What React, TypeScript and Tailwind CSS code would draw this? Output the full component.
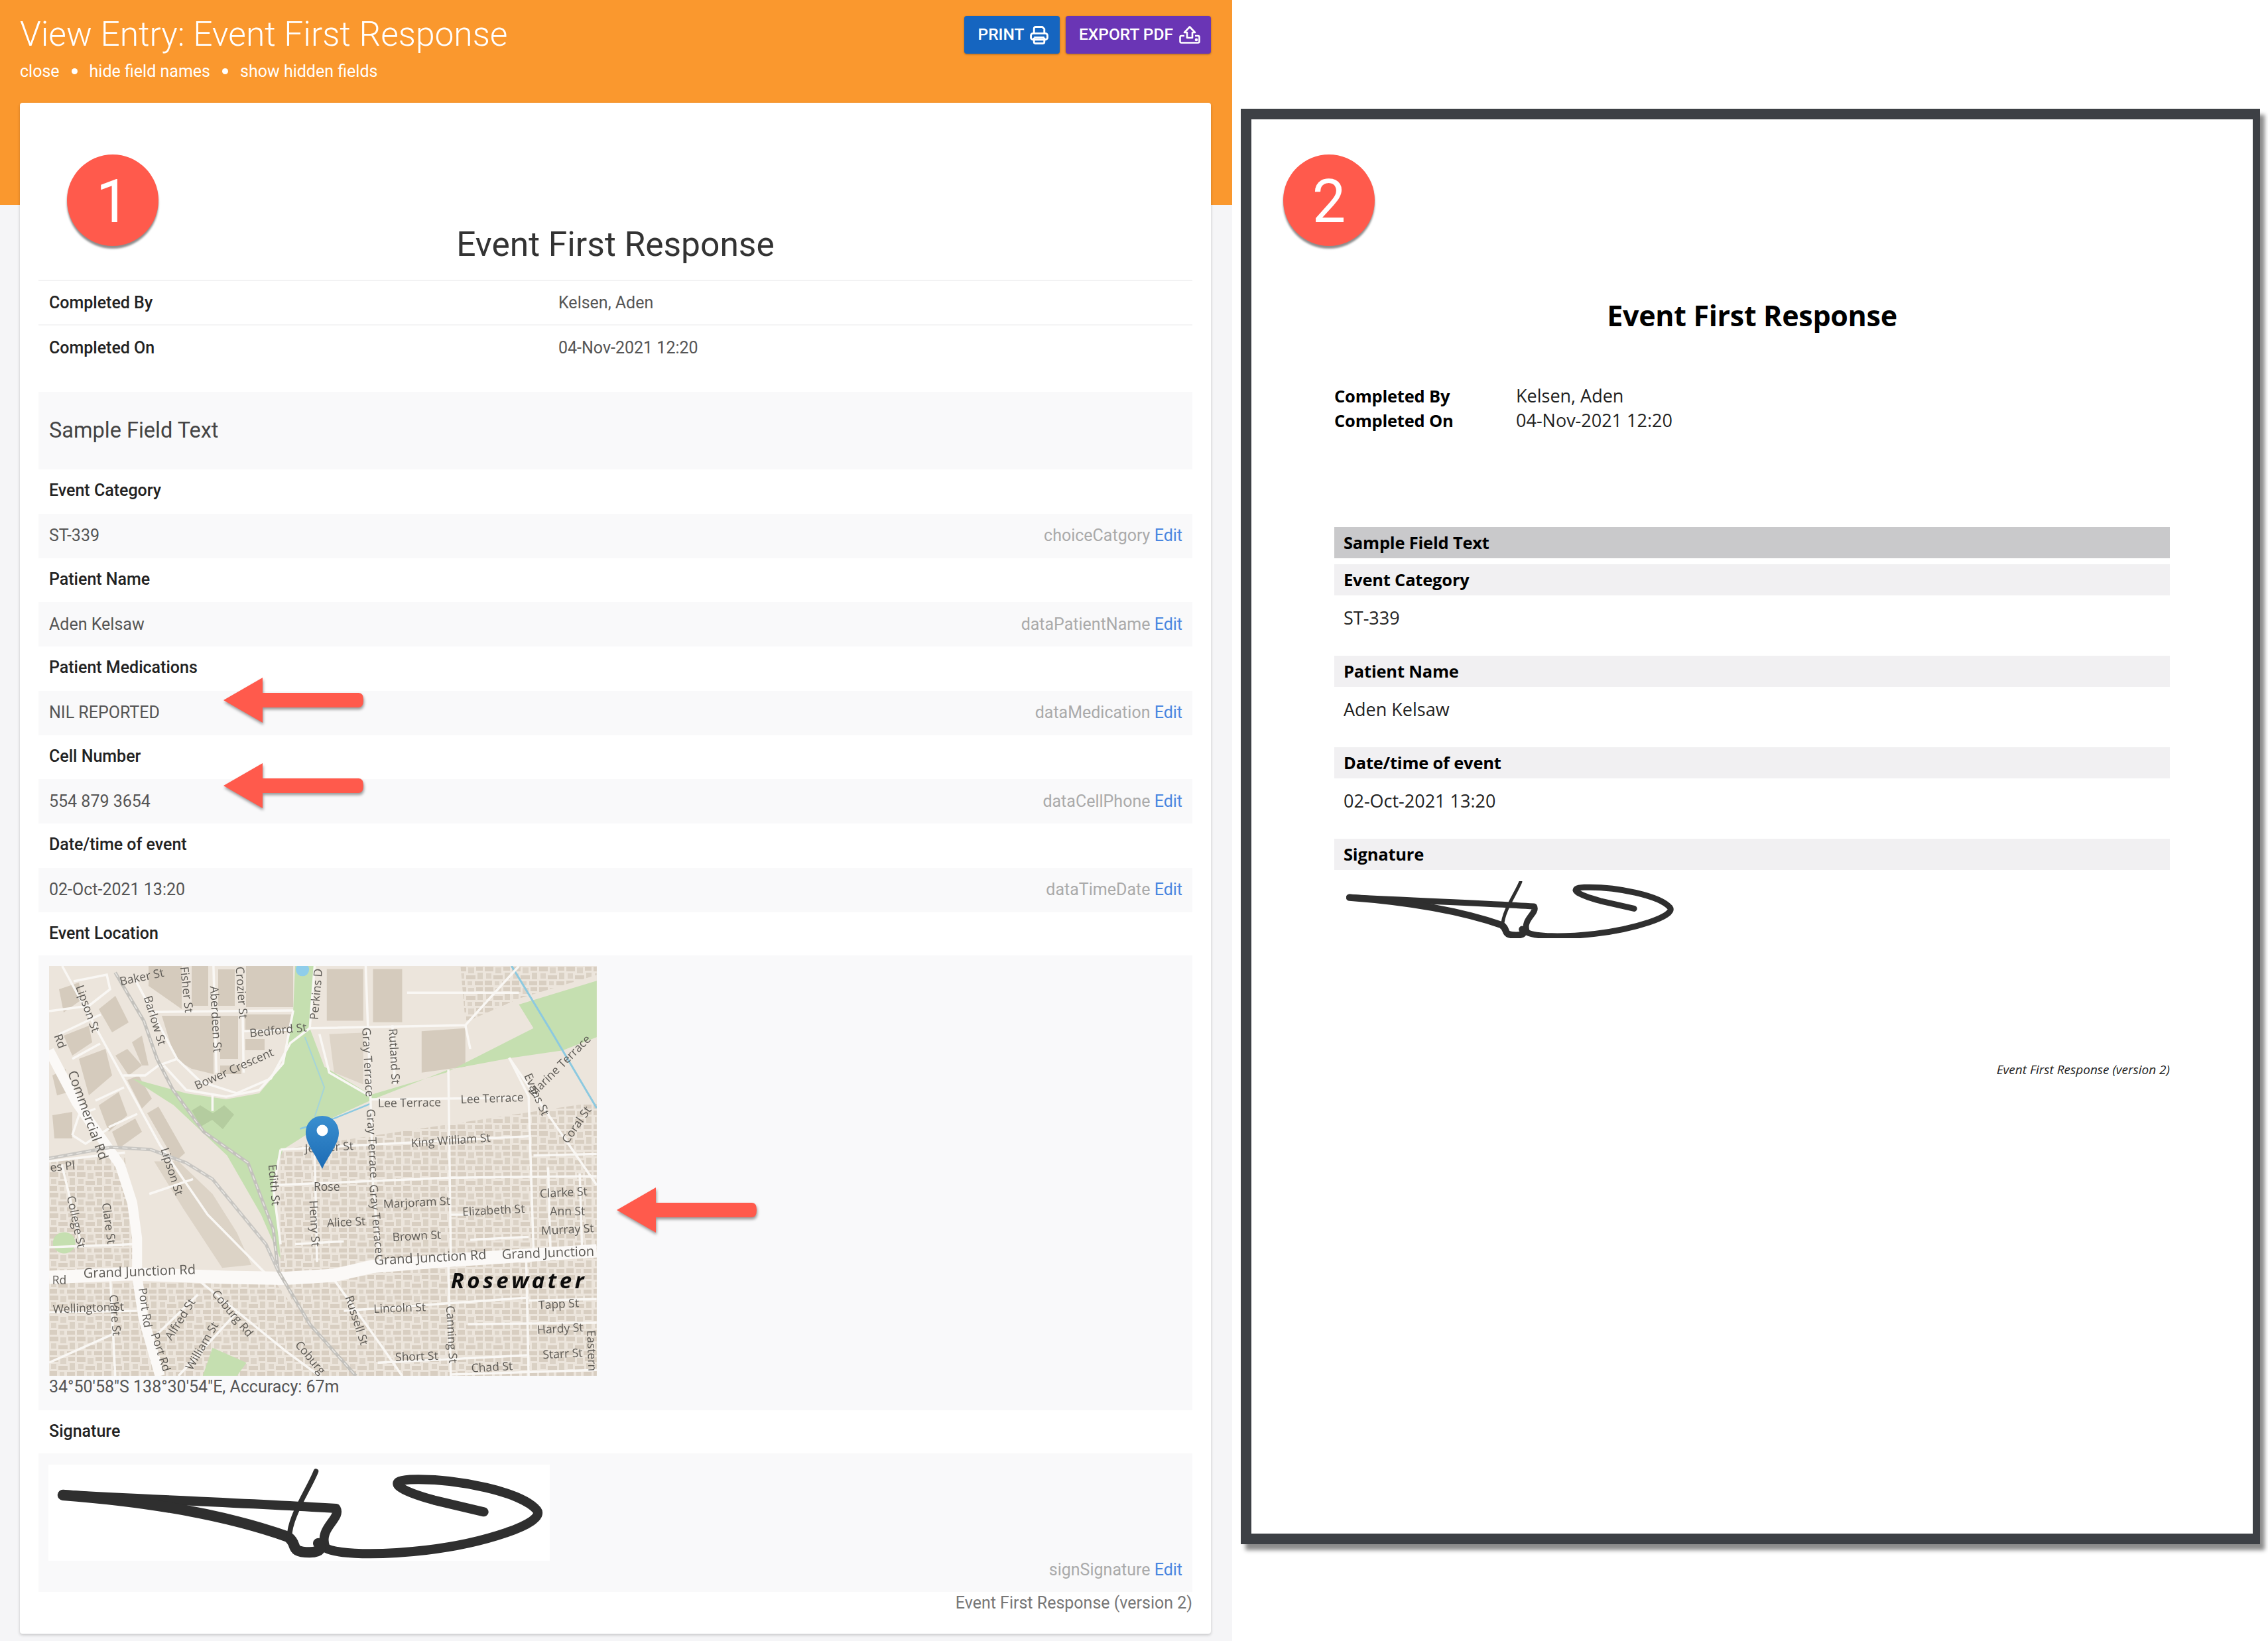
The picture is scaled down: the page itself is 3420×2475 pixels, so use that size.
import type { ReactNode } from "react"

// --- map helpers: coordinates were read off the zoomed crop
const mx = (x: number) => (x - 34) * 0.7334
const my = (y: number) => (y - 60) * 0.4464
const pts = (list: number[][]) => list.map(([x, y]) => `${mx(x)},${my(y)}`).join(" ")

const bigRoads = [
  { w: 20, p: [[34, 1112], [200, 1100], [400, 1112], [520, 1115], [620, 1105], [700, 1075], [850, 1055], [1160, 1022]] },
  { w: 15, p: [[34, 345], [90, 520], [180, 732], [205, 860], [215, 980], [215, 1110], [228, 1250], [262, 1445]] },
]

const roads = [
  [[61, 60], [262, 665], [360, 900], [480, 1100]],
  [[211, 105], [297, 374], [345, 450], [420, 490], [490, 440], [530, 320], [570, 270]],
  [[270, 396], [316, 479], [398, 501], [466, 479], [515, 389], [536, 210]],
  [[250, 215], [536, 210]],
  [[372, 60], [378, 420]],
  [[432, 215], [434, 420]],
  [[435, 280], [536, 275]],
  [[370, 495], [370, 550]],
  [[580, 60], [570, 270], [890, 260], [1000, 60]],
  [[685, 60], [695, 510], [700, 800], [715, 1060]],
  [[740, 260], [745, 460]],
  [[770, 150], [1000, 150]],
  [[890, 260], [900, 340]],
  [[590, 290], [610, 420], [695, 500]],
  [[695, 510], [1010, 505]],
  [[855, 410], [860, 1050]],
  [[980, 370], [1020, 500], [1030, 1020]],
  [[980, 370], [1160, 800]],
  [[510, 680], [1020, 635]],
  [[510, 680], [495, 810], [510, 1000]],
  [[580, 680], [585, 1060]],
  [[500, 800], [860, 775], [1160, 770]],
  [[860, 900], [900, 900]],
  [[900, 985], [1020, 975]],
  [[1030, 700], [1160, 695]],
  [[1060, 740], [1065, 1020]],
  [[1125, 760], [1130, 1020]],
  [[540, 1000], [640, 990]],
  [[34, 720], [190, 690]],
  [[34, 1010], [210, 1000]],
  [[60, 730], [100, 1000]],
  [[160, 1120], [170, 1445]],
  [[34, 1230], [215, 1225]],
  [[340, 1120], [520, 1360], [590, 1445]],
  [[620, 1120], [720, 1350], [760, 1445]],
  [[640, 1225], [1020, 1180]],
  [[855, 1060], [860, 1445]],
  [[1015, 1050], [1020, 1445]],
  [[895, 1270], [1160, 1265]],
  [[710, 1400], [1020, 1375]],
  [[860, 1440], [1160, 1425]],
  [[1020, 1190], [1160, 1185]],
  [[420, 1230], [300, 1445]],
  [[240, 1330], [340, 1170]],
  [[34, 1400], [170, 1300]],
  [[240, 830], [330, 780]],
]

// cross streets at the top left, in map pixels
const pxRoads = [
  "37,23 87,13 92,35 60,60 0,68",
  "15,103 78,73",
  "35,140 77,117",
  "70,203 113,183",
  "90,243 133,223",
  "112,165 145,165 165,150 193,140",
  "35,255 45,225 70,215",
  "35,255 55,268 90,245",
]

const pxBuildings = [
  "150,0 200,0 200,65 150,30", "170,75 248,75 248,163 215,155 190,140", "297,0 368,0 368,62 297,62",
  "296,73 365,73 360,100 296,100", "258,150 290,150 290,163 258,163", "296,110 325,110 325,127 296,127",
  "75,65 100,45 120,85 95,100", "100,135 118,125 140,150 120,165", "125,115 140,105 150,150 140,150",
  "148,222 165,212 205,282 190,295", "118,172 135,165 155,200 140,215",
  "15,35 45,25 50,50 22,70", "22,105 60,90 65,115 35,135", "45,140 85,125 95,165 60,195",
  "75,210 105,190 118,225 90,250", "95,250 130,230 140,250 105,275", "5,225 35,220 35,260 8,260",
  "5,165 25,155 30,190 12,195", "215,0 240,0 240,60 215,60", "255,5 280,5 280,60 255,60",
  "258,75 285,75 285,140 258,140",
]

const labels: [string, number, number, number][] = [
  ["Baker St", 225, 100, -12], ["Fisher St", 315, 140, 84], ["Crozier St", 428, 150, 86], ["Aberdeen St", 375, 240, 87],
  ["Perkins D", 585, 155, -85], ["Lipson St", 112, 205, 70], ["Barlow St", 250, 245, 73], ["Bedford St", 505, 280, -6],
  ["Gray Terrace", 688, 385, 87], ["Rutland St", 742, 365, 87], ["Bower Crescent", 415, 410, -24], ["Marine Terrace", 1085, 400, -45],
  ["Lee Terrace", 775, 525, -1], ["Lee Terrace", 945, 510, -2], ["Evans St", 1035, 495, 66], ["Coral St", 1120, 598, -55],
  ["Commercial Rd", 112, 565, 70], ["Rd", 55, 315, 70], ["King William St", 860, 652, -4], ["Jenner St", 610, 675, -3],
  ["Edith St", 495, 800, 85], ["Rose", 605, 808, 0], ["Henry St", 578, 930, 87], ["Gray Terrace", 705, 915, 85],
  ["Gray Terrace", 697, 660, 87], ["Marjoram St", 790, 862, -3], ["Elizabeth St", 948, 888, -3], ["Clarke St", 1092, 828, -3],
  ["Ann St", 1100, 892, 0], ["Murray St", 1100, 953, -3], ["Alice St", 645, 928, -3], ["Brown St", 790, 975, -3],
  ["Grand Junction Rd", 818, 1048, -3], ["Grand Junction", 1060, 1032, -2], ["Grand Junction Rd", 220, 1095, -2], ["Rd", 55, 1125, 0],
  ["Lipson St", 285, 755, 72], ["es Pl", 62, 740, -6], ["College St", 88, 925, 78], ["Clare St", 155, 930, 82],
  ["Port Rd", 230, 1215, 82], ["Port Rd", 262, 1365, 72], ["Russell St", 665, 1258, 72], ["Lincoln St", 755, 1218, -2],
  ["Canning St", 860, 1305, 87], ["Tapp St", 1082, 1205, -3], ["Hardy St", 1085, 1288, -3], ["Starr St", 1090, 1373, -3],
  ["Short St", 790, 1382, -2], ["Chad St", 945, 1418, -3], ["William St", 350, 1345, -60], ["Alfred St", 305, 1255, -58],
  ["Coburg Rd", 410, 1235, 50], ["Clare St", 168, 1240, 85], ["Wellington St", 115, 1218, -2], ["Coburg", 570, 1385, 50], ["Eastern", 1148, 1360, 88],
]

function MapPicture() {
  return (
    <svg width="826" height="618" viewBox="0 0 826 618" className="block blur-[0.6px]">
      <defs>
        <pattern id="houses" width="41" height="31" patternUnits="userSpaceOnUse">
          <rect x="1" y="1" width="13" height="7" fill="#d8cec1" />
          <rect x="17" y="2" width="9" height="9" fill="#dcd3c7" />
          <rect x="29" y="1" width="10" height="6" fill="#d8cec1" />
          <rect x="3" y="11" width="8" height="8" fill="#dcd3c7" />
          <rect x="14" y="14" width="14" height="6" fill="#d8cec1" />
          <rect x="31" y="10" width="8" height="10" fill="#dad1c4" />
          <rect x="1" y="22" width="11" height="7" fill="#d8cec1" />
          <rect x="16" y="23" width="7" height="6" fill="#dcd3c7" />
          <rect x="27" y="23" width="12" height="6" fill="#d8cec1" />
        </pattern>
        <linearGradient id="pin" x1="0" y1="0" x2="0" y2="1">
          <stop offset="0" stopColor="#3a8fd0" />
          <stop offset="1" stopColor="#1c6bb4" />
        </linearGradient>
      </defs>
      <rect width="826" height="618" fill="#ece5dc" />
      <polygon points={pts([[510, 680], [1160, 520], [1160, 1445], [600, 1445], [510, 1100]])} fill="url(#houses)" />
      <polygon points={pts([[34, 720], [190, 700], [210, 1090], [34, 1090]])} fill="url(#houses)" />
      <polygon points={pts([[34, 1130], [500, 1130], [640, 1445], [34, 1445]])} fill="url(#houses)" />
      <polygon points={pts([[880, 60], [1160, 60], [1160, 90], [1000, 170], [890, 250]])} fill="url(#houses)" />
      {pxBuildings.map((p, i) => (
        <polygon key={i} points={p} fill="#d5cbbd" />
      ))}
      {/* big sheds north of the park */}
      <polygon points={pts([[605, 70], [680, 70], [680, 245], [605, 245]])} fill="#d5cbbd" />
      <polygon points={pts([[700, 70], [760, 70], [760, 250], [700, 250]])} fill="#d5cbbd" />
      <polygon points={pts([[800, 280], [890, 270], [890, 400], [800, 420]])} fill="#d5cbbd" />
      <polygon points={pts([[610, 290], [680, 285], [680, 460], [620, 420]])} fill="#ddd4c7" />
      <polygon points={pts([[300, 720], [370, 830], [420, 960], [450, 1070], [390, 1080], [310, 880], [250, 720]])} fill="#dcd3c6" />
      {/* park */}
      <polygon
        points={pts([[205, 440], [316, 490], [398, 510], [466, 490], [515, 395], [536, 210], [540, 60], [580, 60], [570, 270], [600, 400], [695, 495], [850, 420], [1030, 270], [1000, 190], [1160, 110], [1160, 300], [1090, 345], [985, 370], [855, 410], [700, 510], [620, 570], [515, 680], [495, 780], [510, 1050], [470, 900], [400, 700], [290, 530]])}
        fill="#c5dfb0"
      />
      <polygon points="215,218 228,210 247,222 264,210 279,224 262,246 246,232 229,242" fill="#b4cc9f" />
      <ellipse cx={mx(65)} cy={my(995)} rx="17" ry="16" fill="#c5dfb0" />
      <polygon points={pts([[370, 1350], [440, 1400], [420, 1445], [350, 1445]])} fill="#c5dfb0" />
      <circle cx={mx(555)} cy={my(72)} r="10" fill="#8fcdea" />
      {/* creek */}
      <polyline points={pts([[985, 60], [1070, 290], [1160, 540]])} fill="none" stroke="#8cc9e0" strokeWidth="3" />
      <polyline points={pts([[695, 525], [620, 575], [550, 610]])} fill="none" stroke="#8cc9e0" strokeWidth="2.5" />
      <polyline points={pts([[560, 300], [600, 470], [580, 570]])} fill="none" stroke="#a5d4d8" strokeWidth="2" />
      {/* roads */}
      {pxRoads.map((p, i) => (
        <polyline key={i} points={p} fill="none" stroke="#f9f7f4" strokeWidth="3.5" />
      ))}
      {roads.map((p, i) => (
        <polyline key={i} points={pts(p)} fill="none" stroke="#f9f7f4" strokeWidth="3.5" />
      ))}
      {bigRoads.map((r, i) => (
        <polyline key={i} points={pts(r.p)} fill="none" stroke="#fbf9f7" strokeWidth={r.w} strokeLinejoin="round" />
      ))}
      {/* rail lines */}
      <polyline points={pts([[170, 82], [229, 246], [256, 374], [289, 479], [352, 620], [443, 725], [495, 950], [505, 1090], [570, 1270], [665, 1445]])} fill="none" stroke="#c3c1bc" strokeWidth="5" />
      <polyline points={pts([[170, 82], [229, 246], [256, 374], [289, 479], [352, 620], [443, 725], [495, 950], [505, 1090], [570, 1270], [665, 1445]])} fill="none" stroke="#e8e6e2" strokeWidth="1.5" strokeDasharray="8 6" />
      <polyline points={pts([[34, 710], [161, 672], [243, 680], [316, 725], [370, 780], [480, 1000], [505, 1090]])} fill="none" stroke="#c8c6c2" strokeWidth="5" />
      <polyline points={pts([[34, 710], [161, 672], [243, 680], [316, 725], [370, 780], [480, 1000], [505, 1090]])} fill="none" stroke="#e8e6e2" strokeWidth="1.5" strokeDasharray="8 6" />
      {labels.map(([t, x, y, r], i) => (
        <text
          key={i}
          x={mx(x)}
          y={my(y)}
          transform={`rotate(${r} ${mx(x)} ${my(y)})`}
          textAnchor="middle"
          dominantBaseline="middle"
          fontFamily="'Open Sans', sans-serif"
          fontSize={t.startsWith("Grand") || t.startsWith("Commercial") ? 20 : 17.5}
          fill="#5d5a55"
        >
          {t}
        </text>
      ))}
      <text x={mx(860)} y={my(1148)} fontFamily="'Open Sans', sans-serif" fontWeight="700" fontStyle="italic" fontSize="33" letterSpacing="4.5" fill="#0c0c0c">
        Rosewater
      </text>
      {/* pin */}
      <path d="M 412 226 C 397 226 387 237 387 252 C 387 268 403 286 412 306 C 421 286 437 268 437 252 C 437 237 427 226 412 226 Z" fill="url(#pin)" />
      <circle cx="412" cy="248" r="8.5" fill="#ffffff" />
    </svg>
  )
}

function Signature({ width, height, stroke, box }: { width: number; height: number; stroke: number; box: string }) {
  const common = {
    fill: "none",
    stroke: "#2f2f2f",
    strokeLinecap: "round" as const,
    strokeLinejoin: "round" as const,
    vectorEffect: "non-scaling-stroke" as const,
  }
  return (
    <svg width={width} height={height} viewBox={box} preserveAspectRatio="none" className="block">
      <path {...common} strokeWidth={stroke} d="M 78 610 C 200 635 320 650 418 672 C 425 720 395 760 405 850 C 420 880 470 885 530 860 C 600 830 680 740 668 680 C 650 600 570 535 510 542 C 480 548 495 590 540 635 L 602 688" />
      <path {...common} strokeWidth={stroke * 1.15} d="M 78 612 C 180 640 280 700 358 800 C 372 835 358 868 385 870 C 400 868 400 850 396 830" />
      <path {...common} strokeWidth={stroke * 0.55} d="M 393 505 C 385 580 360 710 360 800" />
    </svg>
  )
}

function Arrow({ className }: { className: string }) {
  return (
    <svg width="214" height="72" viewBox="0 0 214 72" className={`absolute drop-shadow-[1px_3px_2px_rgba(0,0,0,0.4)] ${className}`}>
      <path d="M 0 34 L 59 0 L 59 23 L 204 23 Q 211 23 211 34 Q 211 45 204 45 L 59 45 L 59 68 Z" fill="#ff5a4c" />
    </svg>
  )
}

function Badge({ n, className }: { n: number; className: string }) {
  return (
    <div className={`absolute flex h-[138px] w-[138px] items-center justify-center rounded-full bg-[#ff5a4c] pt-1 font-['Roboto',sans-serif] text-[90px] font-normal text-white shadow-[0_4px_3px_rgba(0,0,0,0.45)] ${className}`}>
      {n}
    </div>
  )
}

function FieldRow({ label, value, name }: { label: string; value: string; name: string }) {
  return (
    <>
      <div className="flex h-[66.5px] items-center px-[16px] pb-[3px] font-medium text-[#222]">{label}</div>
      <div className="flex h-[67px] items-center justify-between bg-[#f9f9fa] pr-[15px] pl-[16px] text-[#555]">
        <span>{value}</span>
        <span className="text-[#aaa]">
          {name} <span className="text-[#4a86e0]">Edit</span>
        </span>
      </div>
    </>
  )
}

function PdfBar({ className = "", children }: { className?: string; children: ReactNode }) {
  return <div className={`flex h-[47px] items-center px-[14px] text-[25.5px] font-bold tracking-[-0.2px] text-black ${className}`}>{children}</div>
}

function PrintIcon() {
  return (
    <svg width="28" height="28" viewBox="0 0 27 27" fill="none" stroke="white" strokeWidth="2.8" strokeLinejoin="round">
      <path d="M6 11V4a2.5 2.5 0 0 1 2.5-2.5H18L21 4.5V11" />
      <rect x="1.5" y="11" width="24" height="9" rx="3" />
      <path d="M6 17v6.5a2 2 0 0 0 2 2h11a2 2 0 0 0 2-2V17" />
      <path d="M6 17h15" />
    </svg>
  )
}

function ExportIcon() {
  return (
    <svg width="32" height="27" viewBox="0 0 32 27" fill="none" stroke="white" strokeWidth="2.6" strokeLinejoin="round">
      <path d="M16 1.5 L8 10 H12 V18 H20 V10 H24 Z" />
      <path d="M8 15 H3.5 a2 2 0 0 0 -2 2 V23.5 a2 2 0 0 0 2 2 H28.5 a2 2 0 0 0 2-2 V17 a2 2 0 0 0 -2-2 H24" />
      <circle cx="26" cy="21" r="1" fill="white" />
    </svg>
  )
}

export default function App() {
  return (
    <div className="relative flex h-[2475px] w-[3420px] items-start overflow-hidden bg-white font-['Roboto',sans-serif]">
      {/* Web view */}
      <div className="h-[2475px] w-[1858px] bg-[#f5f5f7]">
        <div className="h-[309px] bg-[#fa982e] px-[30px] pt-[20px] text-white">
          <div className="flex items-start justify-between">
            <h1 className="text-[51.5px] leading-[64px] font-light">View Entry: Event First Response</h1>
            <div className="mt-1 mr-[2px] flex gap-[9px] text-[24.5px] font-medium">
              <button className="flex h-[57px] w-[144px] items-center justify-center gap-[9px] rounded bg-[#1565c0] pl-1 shadow-[0_1px_3px_rgba(0,0,0,0.35)]">
                PRINT <PrintIcon />
              </button>
              <button className="flex h-[57px] w-[219px] items-center justify-center gap-[9px] rounded bg-[#6a35b5] pl-1 shadow-[0_1px_3px_rgba(0,0,0,0.35)]">
                EXPORT PDF <ExportIcon />
              </button>
            </div>
          </div>
          <div className="mt-[5px] flex items-center gap-[18px] text-[25px]">
            <span>close</span>
            <span className="h-[9px] w-[9px] rounded-full bg-white" />
            <span>hide field names</span>
            <span className="h-[9px] w-[9px] rounded-full bg-white" />
            <span>show hidden fields</span>
          </div>
        </div>

        <div className="mr-[32px] ml-[30px] -mt-[154px] h-[2309px] rounded bg-white px-[28px] text-[25px] shadow-[0_2px_4px_rgba(0,0,0,0.2)]">
          <h2 className="flex h-[269px] items-end justify-center border-b-2 border-[#f2f2f3] pb-[18px] text-[51.5px] leading-[70px] text-[#333]">Event First Response</h2>
          <div className="flex h-[67px] items-center border-b-2 border-[#f4f4f5] px-[16px] text-[#555]">
            <span className="w-[768px] font-medium text-[#222]">Completed By</span>
            <span>Kelsen, Aden</span>
          </div>
          <div className="flex h-[67px] items-center px-[16px] text-[#555]">
            <span className="w-[768px] font-medium text-[#222]">Completed On</span>
            <span>04-Nov-2021 12:20</span>
          </div>
          <div className="mt-[33px] flex h-[117px] items-center bg-[#f9f9fa] px-[16px] text-[32.5px] text-[#444]">Sample Field Text</div>

          <FieldRow label="Event Category" value="ST-339" name="choiceCatgory" />
          <FieldRow label="Patient Name" value="Aden Kelsaw" name="dataPatientName" />
          <FieldRow label="Patient Medications" value="NIL REPORTED" name="dataMedication" />
          <FieldRow label="Cell Number" value="554 879 3654" name="dataCellPhone" />
          <FieldRow label="Date/time of event" value="02-Oct-2021 13:20" name="dataTimeDate" />

          <div className="flex h-[65px] items-center px-[16px] font-medium text-[#222]">Event Location</div>
          <div className="h-[686px] bg-[#f9f9fa] px-[16px] pt-[16px]">
            <MapPicture />
            <div className="-mt-[2px] text-[#555]">34°50'58"S 138°30'54"E, Accuracy: 67m</div>
          </div>

          <div className="flex h-[65px] items-center px-[16px] font-medium text-[#222]">Signature</div>
          <div className="h-[209px] bg-[#f9f9fa] pt-[17px] pr-[15px] pl-[15px]">
            <div className="w-[756px] bg-white">
              <Signature width={756} height={145} stroke={14} box="60 475 624 433" />
            </div>
            <div className="-mt-[5px] text-right text-[#aaa]">
              signSignature <span className="text-[#4a86e0]">Edit</span>
            </div>
          </div>
          <div className="-mt-[2px] text-right text-[#777]">Event First Response (version 2)</div>
        </div>
      </div>

      {/* PDF view */}
      <div className="mt-[164px] ml-[13px] h-[2165px] w-[1537px] border-[16px] border-r-[11px] border-[#3d4045] bg-white pt-[268px] pr-[125px] pl-[125px] font-['Open_Sans',sans-serif] text-[27px] text-[#222] shadow-[7px_9px_6px_rgba(0,0,0,0.45)]">
        <h2 className="mb-[75px] text-center text-[43px] leading-[56px] font-bold tracking-[-0.3px] text-black">Event First Response</h2>
        <div className="flex h-[37px] items-center">
          <span className="w-[274px] text-[25.5px] font-bold tracking-[-0.2px] text-black">Completed By</span>
          <span>Kelsen, Aden</span>
        </div>
        <div className="flex h-[37px] items-center">
          <span className="w-[274px] text-[25.5px] font-bold tracking-[-0.2px] text-black">Completed On</span>
          <span>04-Nov-2021 12:20</span>
        </div>
        <PdfBar className="mt-[142px] bg-[#c9c9cb]">Sample Field Text</PdfBar>
        <PdfBar className="mt-[9px] bg-[#f1f0f2]">Event Category</PdfBar>
        <div className="flex h-[68px] items-center px-[14px]">ST-339</div>
        <PdfBar className="mt-[23px] bg-[#f1f0f2]">Patient Name</PdfBar>
        <div className="flex h-[68px] items-center px-[14px]">Aden Kelsaw</div>
        <PdfBar className="mt-[23px] bg-[#f1f0f2]">Date/time of event</PdfBar>
        <div className="flex h-[68px] items-center px-[14px]">02-Oct-2021 13:20</div>
        <PdfBar className="mt-[23px] bg-[#f1f0f2]">Signature</PdfBar>
        <div className="mt-[17px] pl-[18px]">
          <Signature width={498} height={86} stroke={9} box="72 500 608 390" />
        </div>
        <div className="mt-[184px] text-right text-[19px] font-medium text-[#222] italic">Event First Response (version 2)</div>
      </div>

      {/* callouts */}
      <Badge n={1} className="top-[233px] left-[101px]" />
      <Badge n={2} className="top-[233px] left-[1935px]" />
      <Arrow className="top-[1022px] left-[337px]" />
      <Arrow className="top-[1151px] left-[337px]" />
      <Arrow className="top-[1791px] left-[930px]" />
    </div>
  )
}
